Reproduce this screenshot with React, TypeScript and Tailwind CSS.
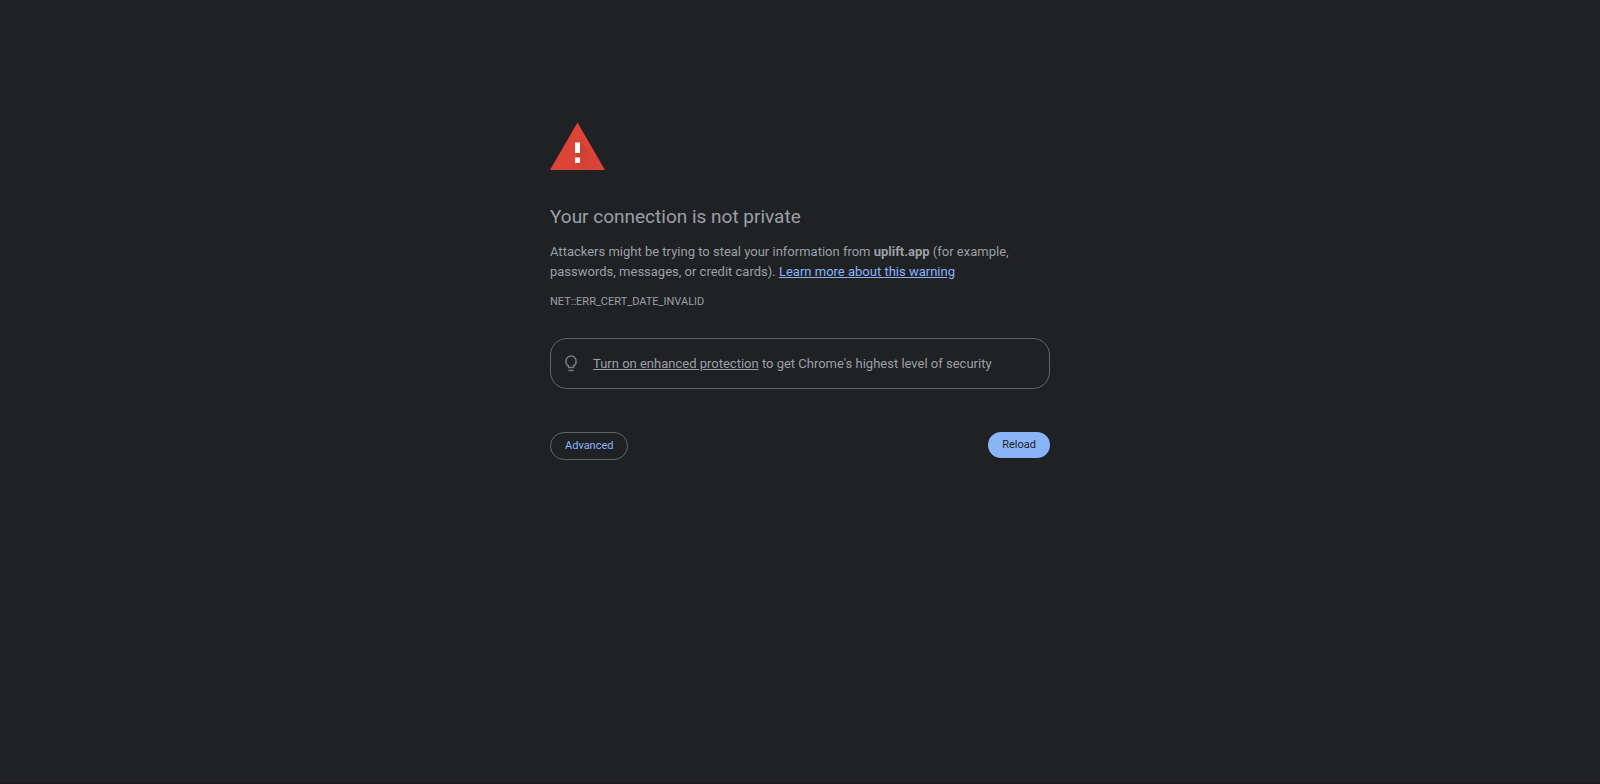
import React from "react";

const WarningIcon: React.FC = () => (
  <svg width="55" height="48" viewBox="0 0 55 48" aria-hidden="true">
    <defs>
      <linearGradient id="shade" x1="0" y1="0" x2="1" y2="1">
        <stop offset="0" stopColor="#b93a2e" />
        <stop offset="1" stopColor="#db4437" stopOpacity="0" />
      </linearGradient>
    </defs>
    <path d="M27.5 0.5 55 48H0Z" fill="#db4437" />
    <path d="M30 20 42 32 49 48H34L25 41Z" fill="url(#shade)" />
    <path d="M25 20.5h5v10.5h-5zM25 35.5h5v5.5h-5z" fill="#fff" />
  </svg>
);

const BulbIcon: React.FC = () => (
  <svg width="20" height="20" viewBox="0 0 20 20" fill="none" stroke="#76797d" strokeWidth="1.5" aria-hidden="true">
    <path d="M7.5 13.5V12C5.8 11 4.9 9.3 4.9 7.2a5.1 5.1 0 0 1 10.2 0c0 2.1-.9 3.8-2.6 4.8v1.5Z" />
    <path d="M7.5 16.5h5" />
  </svg>
);

const App: React.FC = () => {
  return (
    <div className="min-h-screen border-b border-[#1f181b] bg-[#202124] text-[#9aa0a6] font-[Roboto,sans-serif] text-[13px] leading-5">
      <main className="mx-auto w-full max-w-[500px] pt-[122px]">
        <WarningIcon />

        <h1 className="mt-8 text-[19px] leading-[30px]">Your connection is not private</h1>

        <p className="mt-[10px]">
          Attackers might be trying to steal your information from{" "}
          <strong className="font-bold">uplift.app</strong> (for example,
          <br />
          passwords, messages, or credit cards).{" "}
          <a href="#learn-more" className="text-[#8ab4f8] underline">
            Learn more about this warning
          </a>
        </p>

        <p className="mt-3 text-[11px] leading-4">NET::ERR_CERT_DATE_INVALID</p>

        <div className="mt-7 flex items-center gap-3 rounded-[17px] border border-[#5f6368] px-[10px] pt-[15px] pb-[14px]">
          <BulbIcon />
          <p>
            <a href="#enhanced-protection" className="underline">
              Turn on enhanced protection
            </a>{" "}
            to get Chrome's highest level of security
          </p>
        </div>

        <div className="mt-[43px] flex items-start justify-between text-[11px]">
          <button
            type="button"
            className="rounded-full border border-[#5f6368] px-[14px] py-[3px] text-[#8ab4f8]"
          >
            Advanced
          </button>
          <button type="button" className="rounded-full bg-[#8ab4f8] px-[14px] py-[3px] text-[#202124]">
            Reload
          </button>
        </div>
      </main>
    </div>
  );
};

export default App;
